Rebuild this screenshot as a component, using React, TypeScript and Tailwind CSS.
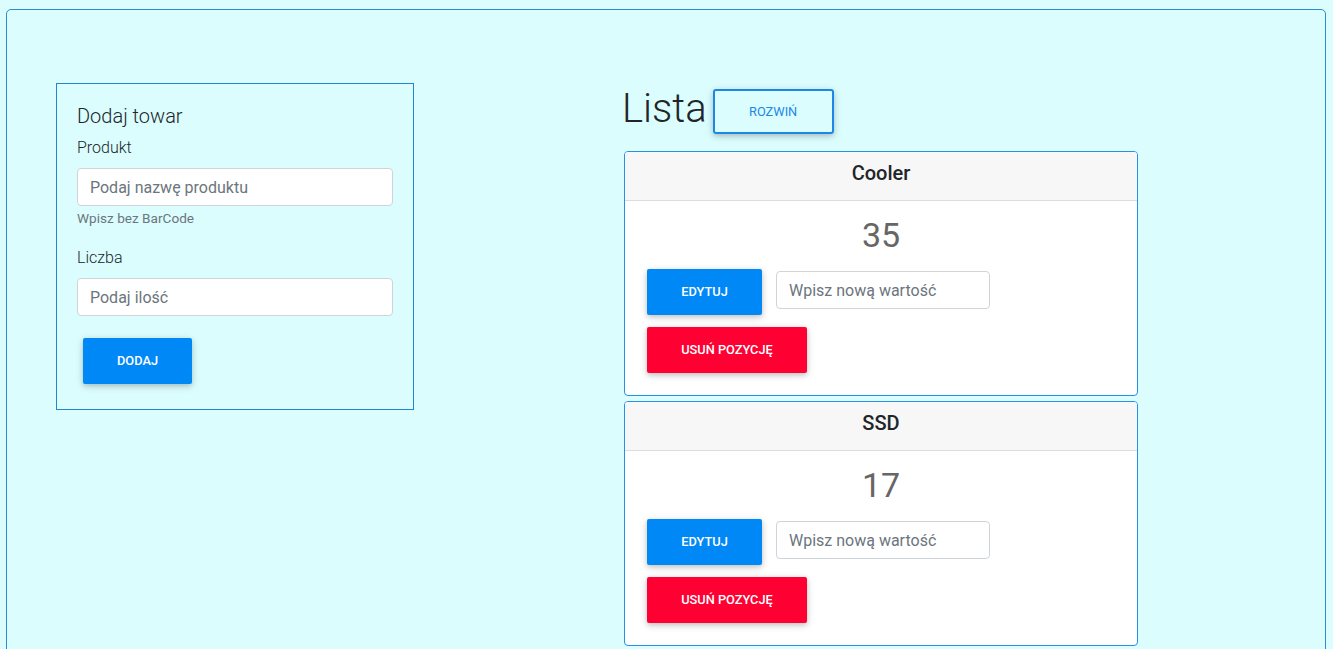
import React from "react";

const shadow = "shadow-[0_2px_5px_0_rgba(0,0,0,0.16),0_2px_10px_0_rgba(0,0,0,0.12)]";

function ItemCard({ name, qty, className }: { name: string; qty: number; className?: string }) {
  return (
    <div className={"w-[514px] border border-[#2590e6] rounded-[4px] overflow-hidden bg-white " + (className ?? "")}>
      <div className="h-[49px] bg-[#f7f7f7] border-b border-[#dcdcdc] text-center pt-[9px] text-[20px] leading-[24px] font-medium text-[#212529]">
        {name}
      </div>
      <div className="pt-[14px] pb-[22px] px-[22px]">
        <div className="text-[34px] leading-[41px] text-center text-[#666666] mb-[13px]">{qty}</div>
        <div className="flex items-start">
          <button
            className={"w-[115px] h-[46px] rounded-[2px] bg-[#0088f7] text-white text-[12.8px] font-medium uppercase " + shadow}
          >
            Edytuj
          </button>
          <input
            className="ml-[14px] mt-[2px] w-[214px] h-[38px] border border-[#ced4da] rounded-[4px] bg-white px-3 text-[16px] text-[#495057] placeholder:text-[#6c757d] outline-none"
            placeholder="Wpisz nową wartość"
          />
        </div>
        <div className="mt-[12px]">
          <button
            className={"w-[160px] h-[46px] rounded-[2px] bg-[#ff0033] text-white text-[12.8px] font-medium uppercase " + shadow}
          >
            Usuń pozycję
          </button>
        </div>
      </div>
    </div>
  );
}

export default function App() {
  return (
    <div className="min-h-screen bg-[#dbfdfe] font-['Roboto',sans-serif] pt-[9px] pl-[6px] text-[#212529]">
      <div className="w-[1320px] border border-[#2b8ccf] rounded-[5px] pt-[73px] pl-[49px] pb-[40px] flex items-start">
        {/* Left panel */}
        <div className="w-[358px] border border-[#2186d2] px-[20px] pt-[20px] pb-[25px]">
          <h5 className="text-[20px] leading-[24px] font-light mb-[8px]">Dodaj towar</h5>
          <label className="block text-[16px] leading-[24px] font-light mb-[8px]">Produkt</label>
          <input
            className="block w-full h-[38px] border border-[#ced4da] rounded-[4px] bg-white px-3 text-[16px] placeholder:text-[#6c757d] outline-none"
            placeholder="Podaj nazwę produktu"
          />
          <div className="mt-[2px] h-[20px] leading-[20px] text-[13.6px] text-[#6c757d]">Wpisz bez BarCode</div>
          <label className="block mt-[18px] text-[16px] leading-[24px] font-light mb-[8px]">Liczba</label>
          <input
            className="block w-full h-[38px] border border-[#ced4da] rounded-[4px] bg-white px-3 text-[16px] placeholder:text-[#6c757d] outline-none"
            placeholder="Podaj ilość"
          />
          <button
            className={"mt-[22px] ml-[6px] w-[109px] h-[46px] rounded-[2px] bg-[#0088f7] text-white text-[12.8px] font-medium uppercase " + shadow}
          >
            Dodaj
          </button>
        </div>

        {/* Right column */}
        <div className="ml-[210px]">
          <div className="flex items-start">
            <h1 className="-ml-[2px] text-[40px] leading-[52px] font-light">Lista</h1>
            <button
              className={"ml-[6px] mt-[6px] w-[121px] h-[45px] rounded-[3px] border-2 border-[#1b87e6] text-[#1b87e6] text-[12.8px] uppercase bg-transparent " + shadow}
            >
              Rozwiń
            </button>
          </div>
          <ItemCard name="Cooler" qty={35} className="mt-[16px]" />
          <ItemCard name="SSD" qty={17} className="mt-[5px]" />
        </div>
      </div>
    </div>
  );
}
